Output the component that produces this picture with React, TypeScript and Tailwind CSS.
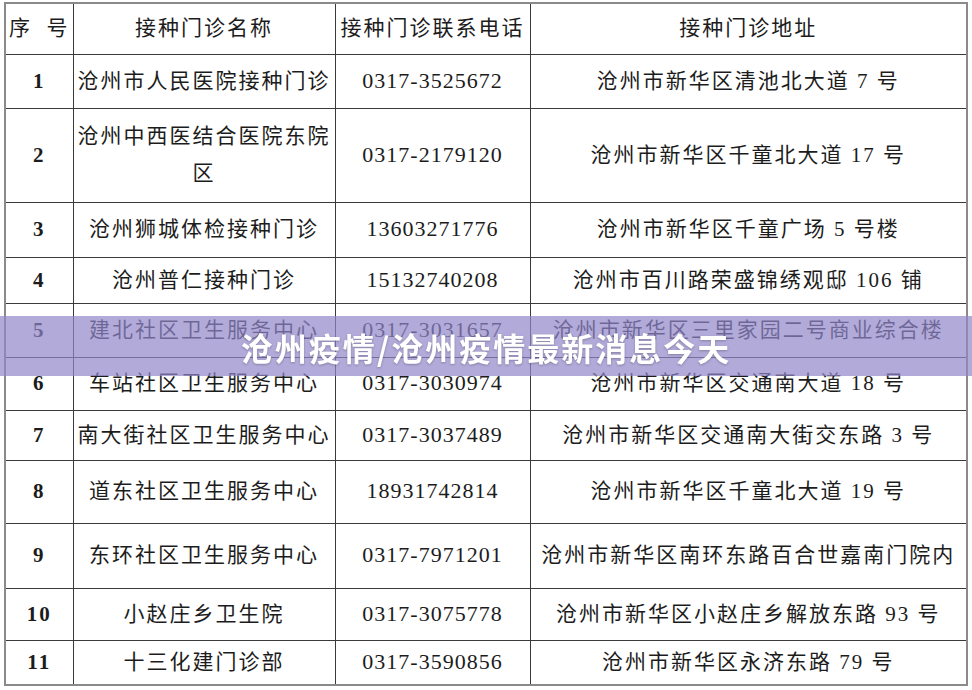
import React from "react";

type Row = { no: string; name: React.ReactNode; phone: string; addr: string; h: string };

const rows: Row[] = [
  { no: "1", name: "沧州市人民医院接种门诊", phone: "0317-3525672", addr: "沧州市新华区清池北大道 7 号", h: "h-[54px]" },
  {
    no: "2",
    name: (
      <>
        沧州中西医结合医院东院
        <br />区
      </>
    ),
    phone: "0317-2179120",
    addr: "沧州市新华区千童北大道 17 号",
    h: "h-[94px]",
  },
  { no: "3", name: "沧州狮城体检接种门诊", phone: "13603271776", addr: "沧州市新华区千童广场 5 号楼", h: "h-[55px]" },
  { no: "4", name: "沧州普仁接种门诊", phone: "15132740208", addr: "沧州市百川路荣盛锦绣观邸 106 铺", h: "h-[46px]" },
  { no: "5", name: "建北社区卫生服务中心", phone: "0317-3031657", addr: "沧州市新华区三里家园二号商业综合楼", h: "h-[54px]" },
  { no: "6", name: "车站社区卫生服务中心", phone: "0317-3030974", addr: "沧州市新华区交通南大道 18 号", h: "h-[53px]" },
  { no: "7", name: "南大街社区卫生服务中心", phone: "0317-3037489", addr: "沧州市新华区交通南大街交东路 3 号", h: "h-[50px]" },
  { no: "8", name: "道东社区卫生服务中心", phone: "18931742814", addr: "沧州市新华区千童北大道 19 号", h: "h-[63px]" },
  { no: "9", name: "东环社区卫生服务中心", phone: "0317-7971201", addr: "沧州市新华区南环东路百合世嘉南门院内", h: "h-[65px]" },
  { no: "10", name: "小赵庄乡卫生院", phone: "0317-3075778", addr: "沧州市新华区小赵庄乡解放东路 93 号", h: "h-[52px]" },
  { no: "11", name: "十三化建门诊部", phone: "0317-3590856", addr: "沧州市新华区永济东路 79 号", h: "h-[45px]" },
];

const cell = "border border-[#3a3a3a] text-center align-middle px-0 leading-[1.75]";

export default function App() {
  return (
    <div className="relative w-[972px] h-[690px] bg-white overflow-hidden pl-[4px] pt-[2px] font-['Liberation_Serif','Noto_Sans_CJK_SC',serif] text-[#1c1c1c]">
      <table className="border-collapse table-fixed w-[962px] border-2 border-[#8a8a8a] text-[21px] tracking-[2px]">
        <colgroup>
          <col className="w-[68px]" />
          <col className="w-[262px]" />
          <col className="w-[195px]" />
          <col className="w-[437px]" />
        </colgroup>
        <thead>
          <tr className="h-[51px]">
            <th className={`${cell} font-normal`}>序&nbsp;&nbsp;号</th>
            <th className={`${cell} font-normal`}>接种门诊名称</th>
            <th className={`${cell} font-normal`}>接种门诊联系电话</th>
            <th className={`${cell} font-normal`}>接种门诊地址</th>
          </tr>
        </thead>
        <tbody>
          {rows.map((r) => (
            <tr key={r.no} className={r.h}>
              <td className={`${cell} font-bold`}>{r.no}</td>
              <td className={cell}>{r.name}</td>
              <td className={`${cell} text-[22px] tracking-[1px]`}>{r.phone}</td>
              <td className={cell}>{r.addr}</td>
            </tr>
          ))}
        </tbody>
      </table>

      {/* 标题遮罩 */}
      <div className="absolute left-0 right-0 top-[316px] h-[60px] bg-[rgba(145,136,203,0.7)] flex items-center justify-center">
        <h1 className="text-white font-bold text-[32px] leading-none tracking-[2px] pt-[2px] font-['Noto_Sans_CJK_SC',sans-serif] drop-shadow-[0_1px_1px_rgba(0,0,0,0.25)]">
          沧州疫情/沧州疫情最新消息今天
        </h1>
      </div>
    </div>
  );
}
